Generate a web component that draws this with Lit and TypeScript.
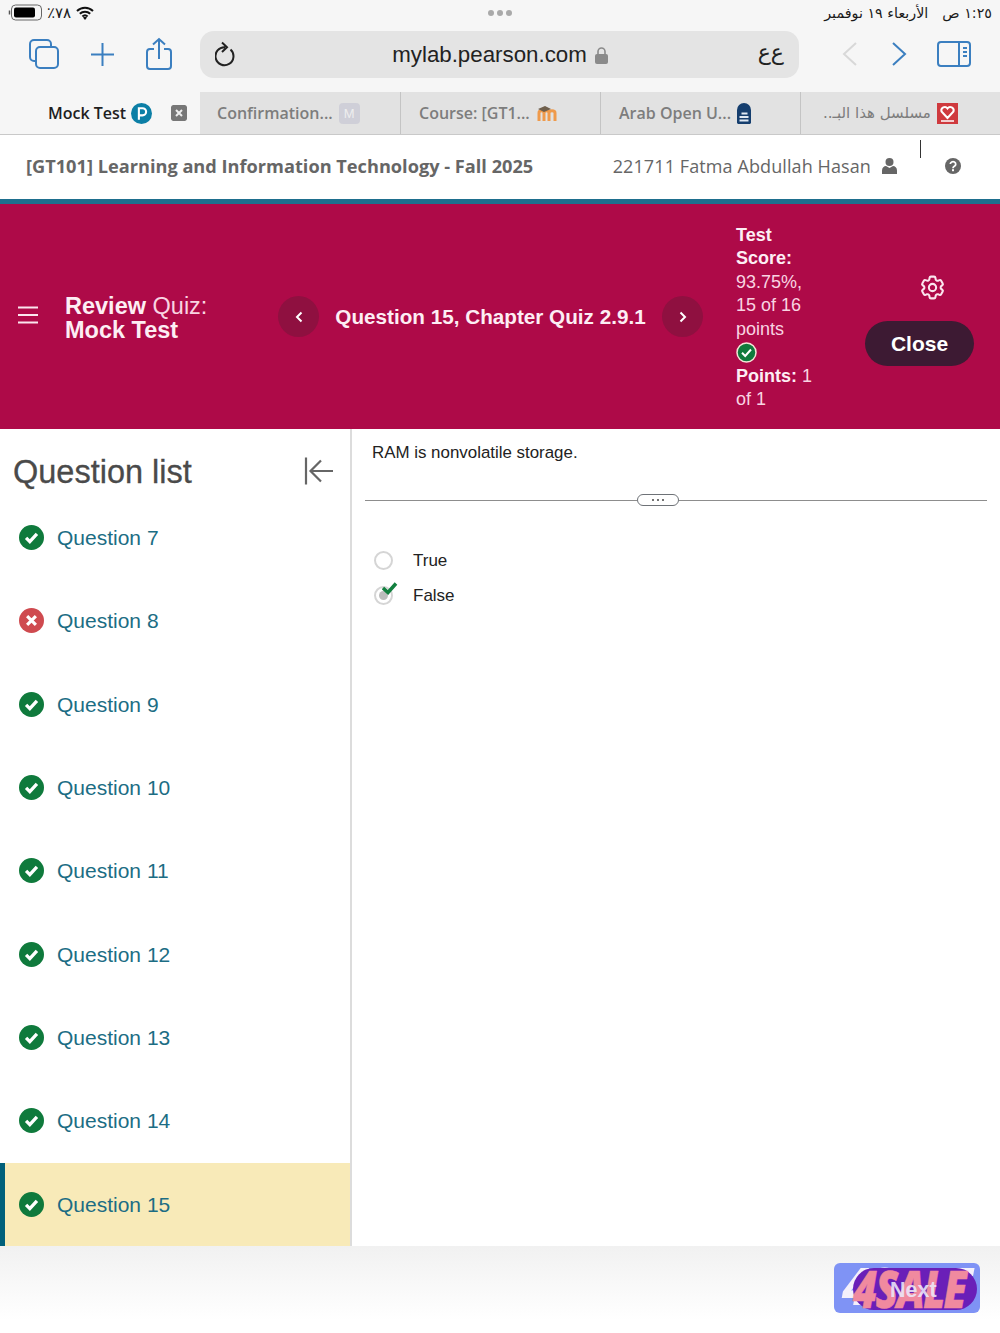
import { LitElement, html, css, svg } from 'lit';
import { customElement } from 'lit/decorators.js';

const BLUE = '#3b7fc0';

const checkIcon = svg`<circle cx="12" cy="12" r="12" fill="#0f7a3c"/><path d="M6.800 12.400l3.600 3.600 6.800-7.400" fill="none" stroke="#fff" stroke-width="3.200"/>`;
const crossIcon = svg`<circle cx="12" cy="12" r="12" fill="#cf4a4f"/><path d="M7.800 7.800l8.400 8.400M16.200 7.800l-8.400 8.400" fill="none" stroke="#fff" stroke-width="3"/>`;

const questions = [
  { n: 7, ok: true },
  { n: 8, ok: false },
  { n: 9, ok: true },
  { n: 10, ok: true },
  { n: 11, ok: true },
  { n: 12, ok: true },
  { n: 13, ok: true },
  { n: 14, ok: true },
  { n: 15, ok: true },
];

@customElement('app-root')
export class AppRoot extends LitElement {
  static styles = css`
    :host {
      display: flex;
      flex-direction: column;
      width: 1000px;
      height: 1333px;
      overflow: hidden;
      position: relative;
      background: #fff;
      font-family: "Liberation Sans", Arial, sans-serif;
    }
    * { box-sizing: border-box; }
    svg { display: block; flex: none; }

    /* browser chrome */
    .chrome { background: #f6f6f6; height: 135px; flex: none; }
    .status {
      height: 30px;
      display: grid;
      grid-template-columns: 1fr auto 1fr;
      align-items: center;
      padding: 0 8px 5px;
      color: #1a1a1a;
    }
    .status-left { display: flex; align-items: center; gap: 5px; font: 15px "DejaVu Sans", sans-serif; letter-spacing: 1px; }
    .status-right {
      justify-self: end;
      display: flex;
      gap: 14px;
      font: 14.300px "DejaVu Sans", sans-serif;
    }
    .dots { display: flex; gap: 3px; }
    .dots i { width: 6px; height: 6px; border-radius: 50%; background: #a9a9a9; }
    .toolbar { height: 48px; display: flex; align-items: center; padding-left: 28px; }
    .tool-group { display: flex; align-items: center; }
    .address {
      margin-left: 27px;
      width: 599px;
      height: 47px;
      background: #e4e4e4;
      border-radius: 14px;
      display: grid;
      grid-template-columns: 1fr auto 1fr;
      align-items: center;
      padding: 0 14px 0 15px;
      color: #222;
    }
    .url { display: flex; align-items: center; gap: 8px; font-size: 22.300px; padding-top: 2px; }
    .aa { justify-self: end; font: 22px "DejaVu Sans", sans-serif; padding: 0 1px 4px 0; }
    .nav { display: flex; align-items: center; margin-left: 42px; gap: 33px; }
    .tabs {
      margin-top: 14px;
      height: 43px;
      display: grid;
      grid-template-columns: repeat(5, 200px);
      border-bottom: 1px solid #c9c9c9;
      font: 600 16px "Open Sans", sans-serif;
    }
    .tab {
      display: flex;
      align-items: center;
      gap: 6px;
      background: #e2e2e2;
      color: #7d7d7d;
      padding-left: 18px;
      border-left: 1px solid #c4c4c4;
      white-space: nowrap;
    }
    .tab.active {
      background: transparent;
      color: #1f1f1f;
      border-left: 0;
      padding-left: 48px;
    }
    .tab.active + .tab { border-left: 0; padding-left: 17px; }
    .tab.active .close-x { margin-left: 13px; }
    .tab.rtl { font-family: "DejaVu Sans", sans-serif; font-size: 15px; font-weight: 400; padding-left: 22px; }
    .close-x {
      width: 16px;
      height: 16px;
      border-radius: 2px;
    }
    .tile {
      width: 21px;
      height: 21px;
      border-radius: 4px;
      background: #cfcfd8;
      color: #eee;
      font: 13px "Liberation Sans", sans-serif;
      display: flex;
      align-items: center;
      justify-content: center;
    }

    /* course bar */
    .course {
      flex: none;
      height: 69px;
      border-bottom: 5px solid #1e6f8e;
      display: flex;
      align-items: center;
      padding: 0 39px 2px 26px;
      color: #666;
      font-family: "Open Sans", sans-serif;
      position: relative;
    }
    .course-title { font-size: 18.200px; font-weight: 700; }
    .user { margin-left: auto; font-size: 18px; letter-spacing: .1px; display: flex; align-items: center; gap: 11px; }
    .help { margin-left: 48px; }
    .caret { position: absolute; left: 920px; top: 5px; width: 1px; height: 18px; background: #333; }

    /* quiz bar */
    .quizbar {
      flex: none;
      height: 225px;
      background: #ae0a48;
      display: flex;
      align-items: center;
      color: #fdeef4;
    }
    .menu { margin: -4px 0 0 18px; }
    .quiz-title { margin-left: 27px; width: 213px; padding-top: 2px; font-size: 23.500px; line-height: 24px; font-weight: 700; }
    .quiz-title span { font-weight: 400; color: #f9d4e2; }
    .round {
      width: 41px;
      height: 41px;
      border-radius: 50%;
      background: #8f1040;
      display: flex;
      align-items: center;
      justify-content: center;
    }
    .quiz-q { width: 343px; padding-top: 1px; text-align: center; font-size: 20.700px; font-weight: 700; white-space: nowrap; }
    .score { margin-left: 33px; width: 84px; padding-top: 2px; font-size: 18px; line-height: 23.500px; color: #f9d4e2; }
    .score b { color: #fdeef4; }
    .score .ok { display: block; width: 21px; height: 23.500px; padding-top: 1px; }
    .actions {
      margin-left: 45px;
      width: 109px;
      display: flex;
      flex-direction: column;
      align-items: center;
      gap: 19.500px;
      padding-top: 5.500px;
    }
    .gear { margin-left: 25px; }
    .close-btn {
      width: 109px;
      height: 45px;
      border-radius: 23px;
      background: #3d1a33;
      color: #fff;
      border: 0;
      font: 700 21px "Liberation Sans", sans-serif;
    }

    /* body */
    .body { flex: 1; display: flex; min-height: 0; }
    .side { width: 352px; border-right: 2px solid #dcdcdc; flex: none; }
    .side-head {
      height: 67px;
      display: flex;
      align-items: center;
      justify-content: space-between;
      padding: 16px 16px 0 13px;
    }
    .side-head h2 { margin: 0; padding-top: 4px; font-size: 32.500px; font-weight: 400; color: #4a4a4a; -webkit-text-stroke: .3px #4a4a4a; }
    .row {
      height: 83.330px;
      display: flex;
      align-items: center;
      gap: 13px;
      padding-left: 19px;
      font-size: 21px;
      color: #1c6d84;
    }
    .row span { padding-top: 1px; }
    .row.current { background: #f8eab8; border-left: 5px solid #00607a; padding-left: 14px; }
    .content { flex: 1; padding: 14px 13px 0 13px; color: #222; }
    .prompt { margin: 0 0 0 7px; font-size: 16.900px; line-height: 19px; }
    .divider { margin-top: 32px; height: 12px; display: flex; align-items: center; }
    .divider i { flex: 1; height: 1px; background: #8d8d8d; }
    .divider i:first-child { flex: none; width: 272px; }
    .grip {
      width: 42px;
      height: 12px;
      border: 1.500px solid #6e7277;
      border-radius: 6px;
      display: flex;
      align-items: center;
      justify-content: center;
      gap: 3px;
    }
    .grip b { width: 2px; height: 2px; border-radius: 50%; background: #444; }
    .answers { margin: 43px 0 0 9px; display: flex; flex-direction: column; gap: 13px; }
    .answer { height: 22px; display: flex; align-items: center; gap: 20px; font-size: 17px; }
    .answer-text { padding-top: 2px; }
    .radio { width: 19px; height: 19px; border: 2px solid #d5d5d5; border-radius: 50%; position: relative; display: flex; align-items: center; justify-content: center; }
    .radio i { width: 9px; height: 9px; background: #bdbdbd; border-radius: 50%; }
    .radio svg { position: absolute; left: 6px; top: -6px; }

    /* footer */
    .foot {
      flex: none;
      height: 87px;
      background: linear-gradient(#f1f1f1, #fff 85%);
    }
    .mark {
      position: absolute;
      left: 834px;
      top: 1263px;
      width: 146px;
      height: 50px;
      border-radius: 6px;
      background: #7f93f5;
    }
    .mark .pill {
      position: absolute;
      left: 19px;
      top: 5px;
      width: 124px;
      height: 42px;
      background: #6a1fb8;
      border-radius: 21px;
    }
    .mark .word {
      position: absolute;
      left: 19px;
      top: 0;
      font: italic 800 52px/50px "Open Sans", sans-serif;
      letter-spacing: -2px;
      color: #f08a9f;
      white-space: nowrap;
      transform: scaleX(.8);
      transform-origin: left center;
      -webkit-text-stroke: .5px #f08a9f;
    }
    .mark .word.back {
      left: 8px;
      top: -3px;
      color: #f4f0fb;
      -webkit-text-stroke: 0;
      transform: scaleX(.92);
    }
    .mark .label {
      position: absolute;
      left: 56px;
      top: 15px;
      font: 700 21.500px "Liberation Sans", sans-serif;
      color: rgba(236, 232, 248, .9);
    }
  `;

  private icon(content: unknown, size: number) {
    return html`<svg width=${size} height=${size} viewBox="0 0 24 24">${content}</svg>`;
  }

  render() {
    return html`
      <div class="chrome">
        <div class="status">
          <div class="status-left">
            <svg width="34" height="17" viewBox="0 0 34 17">
              <path d="M1.500 6.500v4" stroke="#555" stroke-width="1.500"/>
              <rect x="3.500" y="1" width="30" height="15" rx="4" fill="none" stroke="#666"/>
              <rect x="6" y="3.500" width="21" height="10" rx="2" fill="#000"/>
            </svg>
            <span>٪٧٨</span>
            <svg width="18" height="14" viewBox="0 0 18 14">
              <path d="M1 5a11.500 11.500 0 0 1 16 0M3.800 7.800a7.500 7.500 0 0 1 10.400 0M6.400 10.400a3.800 3.800 0 0 1 5.200 0" fill="none" stroke="#111" stroke-width="2"/>
              <path d="M9 14l-2-2.400a3 3 0 0 1 4 0z" fill="#111"/>
            </svg>
          </div>
          <div class="dots"><i></i><i></i><i></i></div>
          <div class="status-right" dir="rtl"><span>١:٢٥ ص</span><span>الأربعاء ١٩ نوفمبر</span></div>
        </div>
        <div class="toolbar">
          <div class="tool-group">
            <svg width="32" height="32" viewBox="0 0 32 32" fill="none" stroke=${BLUE} stroke-width="2">
              <path d="M7 23h-1a4 4 0 0 1-4-4V6a4 4 0 0 1 4-4h13a4 4 0 0 1 4 4v2"/>
              <rect x="8" y="9" width="22" height="21" rx="4"/>
            </svg>
            <svg style="margin-left:30px" width="25" height="25" viewBox="0 0 25 25" fill="none" stroke=${BLUE} stroke-width="2">
              <path d="M12.500 1v23M1 12.500h23"/>
            </svg>
            <svg style="margin-left:30px" width="28" height="34" viewBox="0 0 28 34" fill="none" stroke=${BLUE} stroke-width="2">
              <path d="M9 12H5a3 3 0 0 0-3 3v14a3 3 0 0 0 3 3h18a3 3 0 0 0 3-3V15a3 3 0 0 0-3-3h-4M14 22V2M8 7.500L14 2l6 5.500"/>
            </svg>
          </div>
          <div class="address">
            <svg width="22" height="26" viewBox="0 0 22 26" fill="none" stroke="#222" stroke-width="2">
              <path d="M15.500 8.500a9 9 0 1 1-5.500-2.300M7 1.500L12 6.200 7 11"/>
            </svg>
            <div class="url">
              <span>mylab.pearson.com</span>
              <svg width="13" height="17" viewBox="0 0 13 17">
                <path d="M3 7V4.500a3.500 3.500 0 0 1 7 0V7" fill="none" stroke="#8a8a8a" stroke-width="1.600"/>
                <rect y="7" width="13" height="10" rx="2" fill="#8a8a8a"/>
              </svg>
            </div>
            <div class="aa" dir="rtl">ع‌ع</div>
          </div>
          <div class="nav">
            <svg width="17" height="26" viewBox="0 0 17 26" fill="none" stroke="#d8d8d8" stroke-width="2"><path d="M15 2L3 13l12 11"/></svg>
            <svg width="17" height="26" viewBox="0 0 17 26" fill="none" stroke=${BLUE} stroke-width="2"><path d="M2 2l12 11L2 24"/></svg>
            <svg style="margin-left:-4px" width="34" height="26" viewBox="0 0 34 26" fill="none" stroke=${BLUE} stroke-width="2">
              <rect x="1" y="1" width="32" height="24" rx="3"/>
              <path d="M22 1v24M26 7h4M26 11h4M26 15h4"/>
            </svg>
          </div>
        </div>
        <div class="tabs">
          <div class="tab active">
            <span>Mock Test</span>
            <svg style="margin-left:-1px" width="21" height="21" viewBox="0 0 20 20">
              <circle cx="10" cy="10" r="10" fill="#0c7fa6"/>
              <path d="M7.500 16V5h3.500a3.300 3.300 0 0 1 0 6.800H7.500" fill="none" stroke="#fff" stroke-width="2"/>
            </svg>
            <svg class="close-x" viewBox="0 0 16 16"><rect width="16" height="16" rx="2" fill="#777"/><path d="M5 5l6 6M11 5l-6 6" stroke="#eee" stroke-width="2"/></svg>
          </div>
          <div class="tab"><span>Confirmation...</span><span class="tile">M</span></div>
          <div class="tab">
            <span>Course: [GT1...</span>
            <svg width="22" height="17" viewBox="0 0 22 17">
              <path d="M3 16V8c0-3 5-3 5 0v8M8 16V8c0-3 5-3 5 0v8M13 16V8c0-3 6-3 6 0v8" fill="none" stroke="#ef9a4b" stroke-width="3"/>
              <path d="M2 4l7-3 6 3-7 3z" fill="#6f5f4c"/>
            </svg>
          </div>
          <div class="tab">
            <span>Arab Open U...</span>
            <svg width="14" height="21" viewBox="0 0 14 21">
              <path d="M0 7a7 7 0 0 1 14 0v13l-1 1H1l-1-1z" fill="#153e6e"/>
              <path d="M4.500 10.500h6M2.500 14h9M2.500 17.500h9" stroke="#dfe8f2" stroke-width="2"/>
            </svg>
          </div>
          <div class="tab rtl" dir="ltr">
            <span dir="rtl">مسلسل هذا البـ..</span>
            <svg width="21" height="21" viewBox="0 0 21 21">
              <rect width="21" height="21" fill="#cf3a3e"/>
              <path d="M10.500 15L4.500 8.500a3.400 3.400 0 0 1 6-3 3.400 3.400 0 0 1 6 3z" fill="none" stroke="#fff" stroke-width="2"/>
              <path d="M4 18h13" stroke="#fff" stroke-width="1.500"/>
            </svg>
          </div>
        </div>
      </div>

      <div class="course">
        <span class="course-title">[GT101] Learning and Information Technology - Fall 2025</span>
        <span class="user">221711 Fatma Abdullah Hasan
          <svg width="15" height="16" viewBox="0 0 15 16" fill="#666"><circle cx="7.500" cy="4" r="4"/><path d="M0 16v-3.500C0 9.500 2 8 4 8l3.500 2L11 8c2 0 4 1.500 4 4.500V16z"/></svg>
        </span>
        <svg class="help" width="16" height="16" viewBox="0 0 16 16">
          <circle cx="8" cy="8" r="8" fill="#666"/>
          <path d="M5.300 6a2.700 2.400 0 1 1 4 2.200C8.400 8.800 8 9.200 8 10.200" fill="none" stroke="#fff" stroke-width="1.800"/>
          <rect x="7" y="11.200" width="2" height="2" fill="#fff"/>
        </svg>
        <i class="caret"></i>
      </div>

      <div class="quizbar">
        <svg class="menu" width="20" height="18" viewBox="0 0 20 18" stroke="#fbe6ee" stroke-width="2"><path d="M0 1.500h20M0 9h20M0 16.500h20"/></svg>
        <div class="quiz-title">Review <span>Quiz:</span><br />Mock Test</div>
        <div class="round">
          <svg width="8" height="12" viewBox="0 0 8 12" fill="none" stroke="#fff" stroke-width="2"><path d="M6.500 1.500L2 6l4.500 4.500"/></svg>
        </div>
        <div class="quiz-q">Question 15, Chapter Quiz 2.9.1</div>
        <div class="round">
          <svg width="8" height="12" viewBox="0 0 8 12" fill="none" stroke="#fff" stroke-width="2"><path d="M1.500 1.500L6 6l-4.500 4.500"/></svg>
        </div>
        <div class="score">
          <b>Test Score:</b> 93.75%, 15 of 16 points
          <span class="ok">
            <svg width="21" height="21" viewBox="0 0 21 21">
              <circle cx="10.500" cy="10.500" r="9.500" fill="#0f7a3c" stroke="#f4e6d8" stroke-width="1.500"/>
              <path d="M6 10.800l3.200 3.200 5.800-6.500" fill="none" stroke="#fff" stroke-width="2"/>
            </svg>
          </span>
          <b>Points:</b> 1 of 1
        </div>
        <div class="actions">
          <svg class="gear" width="29" height="29" viewBox="0 0 24 24" fill="none" stroke="#fbe6ee" stroke-width="1.700" stroke-linejoin="round">
            <path d="M9.594 3.940c.09-.542.56-.94 1.110-.94h2.593c.55 0 1.020.398 1.110.94l.213 1.281c.063.374.313.686.645.870.074.040.147.083.22.127.325.196.72.257 1.075.124l1.217-.456a1.125 1.125 0 0 1 1.370.49l1.296 2.247a1.125 1.125 0 0 1-.26 1.431l-1.003.827c-.293.241-.438.613-.43.992a7.723 7.723 0 0 1 0 .255c-.008.378.137.75.43.991l1.004.827c.424.35.534.955.26 1.430l-1.298 2.247a1.125 1.125 0 0 1-1.369.491l-1.217-.456c-.355-.133-.75-.072-1.076.124a6.470 6.470 0 0 1-.22.128c-.331.183-.581.495-.644.869l-.213 1.281c-.09.543-.56.94-1.110.94h-2.594c-.55 0-1.019-.398-1.110-.94l-.213-1.281c-.062-.374-.312-.686-.644-.870a6.520 6.520 0 0 1-.22-.127c-.325-.196-.72-.257-1.076-.124l-1.217.456a1.125 1.125 0 0 1-1.369-.49l-1.297-2.247a1.125 1.125 0 0 1 .26-1.431l1.004-.827c.292-.24.437-.613.43-.991a6.932 6.932 0 0 1 0-.255c.007-.38-.138-.751-.43-.992l-1.004-.827a1.125 1.125 0 0 1-.26-1.430l1.297-2.247a1.125 1.125 0 0 1 1.370-.491l1.216.456c.356.133.751.072 1.076-.124.072-.044.146-.086.22-.128.332-.183.582-.495.644-.869l.214-1.280z"/>
            <circle cx="12" cy="12" r="3"/>
          </svg>
          <button class="close-btn">Close</button>
        </div>
      </div>

      <div class="body">
        <div class="side">
          <div class="side-head">
            <h2>Question list</h2>
            <svg width="30" height="30" viewBox="0 0 30 30" fill="none" stroke="#666" stroke-width="2.200">
              <path d="M2 1.500v27M29 15H7M17 4.500L6.500 15 17 25.500"/>
            </svg>
          </div>
          ${questions.map(
            (q) => html`
              <div class="row ${q.n === 15 ? 'current' : ''}">
                ${this.icon(q.ok ? checkIcon : crossIcon, 25)}
                <span>Question ${q.n}</span>
              </div>
            `,
          )}
        </div>
        <div class="content">
          <p class="prompt">RAM is nonvolatile storage.</p>
          <div class="divider">
            <i></i>
            <div class="grip"><b></b><b></b><b></b></div>
            <i></i>
          </div>
          <div class="answers">
            <div class="answer"><span class="radio"></span><span class="answer-text">True</span></div>
            <div class="answer">
              <span class="radio">
                <i></i>
                <svg width="16" height="14" viewBox="0 0 16 14"><path d="M1 6l5 4.500 8-9" fill="none" stroke="#12803f" stroke-width="3.500"/></svg>
              </span>
              <span class="answer-text">False</span>
            </div>
          </div>
        </div>
      </div>

      <div class="foot"></div>
      <div class="mark">
        <span class="word back" aria-hidden="true">4SALE</span>
        <span class="pill"></span>
        <span class="word">4SALE</span>
        <span class="label">Next</span>
      </div>
    `;
  }
}
